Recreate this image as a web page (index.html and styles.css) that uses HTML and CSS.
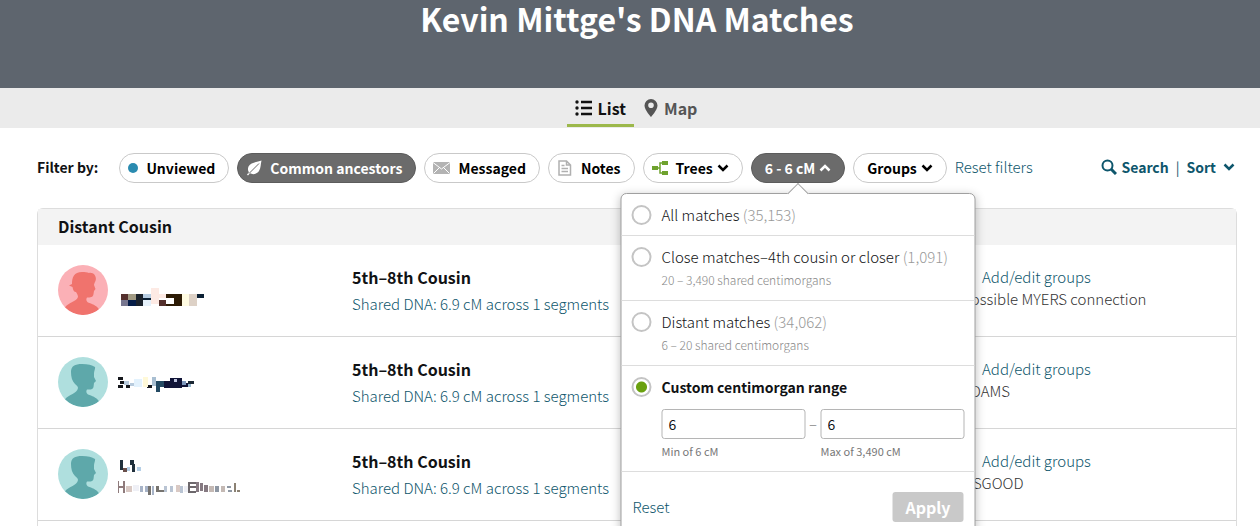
FILE: index.html
```html
<!DOCTYPE html>
<html lang="en">
<head>
    <meta charset="UTF-8">
    <meta name="viewport" content="width=device-width, initial-scale=1">
    <title>Kevin Mittge's DNA Matches</title>
    <link rel="stylesheet" href="styles.css">
</head>
<body>
    <!-- shared shapes -->
    <svg class="sprite" aria-hidden="true">
        <symbol id="chevron" viewBox="0 0 12 8">
            <path d="M1.5 1.5 6 6l4.5-4.5" fill="none" stroke="currentColor" stroke-width="2.5"/>
        </symbol>
        <symbol id="avatar-male" viewBox="0 0 50 50">
            <path d="M7 42.300C11 37 19 37 20 31c0-2-2-3-3-4-3-3-4-7-4-12 0-6 4-8 11-8 6 0 10 1 13 3 .5 2-1 4-1 7v3l2 4-2 2-.5 4c-.5 3-3.500 2.500-6.500 2.500-1 1.500-1 3.500 1 5 4 1.500 8 2.500 11 6.700A25 25 0 0 1 7 42.300z" fill="#5ea8aa"/>
        </symbol>
        <symbol id="avatar-female" viewBox="0 0 50 50">
            <path d="M7 42.300C11 37 18 37 20 32c0-2-1-3-2-5-2 0-3-2-3.500-5L11 20.500l3-1.500c0-7 2-12 10-12 3 0 5 0 7 1 5-1 8 4 6.500 8-1 2-1.500 3-1.500 4l1.500 4-1.500 2-.5 3c-.5 3.500-3 3.500-6.500 3.500-1 1.500-1 3.500 1 5 4 1.500 8 2.500 11 6.700A25 25 0 0 1 7 42.300z" fill="#f0736d"/>
        </symbol>
    </svg>

    <header class="page-header">
        <h1>Kevin Mittge's DNA Matches</h1>
    </header>

    <nav class="view-tabs">
        <a href="#" class="tab active">
            <svg width="17" height="16" viewBox="0 0 17 16" fill="currentColor">
                <circle cx="2" cy="2" r="1.700"/><circle cx="2" cy="8" r="1.700"/><circle cx="2" cy="14" r="1.700"/>
                <path d="M6 .8h11v2.400H6zM6 6.800h11v2.400H6zM6 12.800h11v2.400H6z"/>
            </svg>
            List
        </a>
        <a href="#" class="tab">
            <svg width="14" height="18" viewBox="0 0 14 18">
                <path d="M7 0a6.500 6.500 0 0 0-6.500 6.500C.5 11 7 18 7 18s6.500-7 6.500-11.500A6.500 6.500 0 0 0 7 0zm0 3.500a2.800 2.800 0 1 1 0 5.600 2.800 2.800 0 0 1 0-5.600z" fill="currentColor"/>
            </svg>
            Map
        </a>
    </nav>

    <main class="container">
        <div class="filters">
            <span class="filter-label">Filter by:</span>
            <div class="pills">
                <button type="button" class="pill"><span class="dot"></span>Unviewed</button>
                <button type="button" class="pill selected">
                    <svg width="16" height="16" viewBox="0 0 16 16">
                        <path d="M15.500.5C12 2 5 2 2.500 6.500 1.500 9 2 11 3 12.300L1 14.500l1 1 2-2.200c3 1.700 7 .7 9-2.300C15 8 14.500 4 15.500.5z" fill="#fff"/>
                        <path d="M3 13.500 13 3.500" stroke="#6b6b6b" fill="none"/>
                    </svg>
                    Common ancestors
                </button>
                <button type="button" class="pill">
                    <svg width="17" height="12" viewBox="0 0 17 12">
                        <path d="M0 0h17v12H0z" fill="#b3b3b3"/>
                        <path d="M0 .5l8.500 6.500L17 .5M.5 11.500l6-6M16.500 11.500l-6-6" stroke="#fff" fill="none"/>
                    </svg>
                    Messaged
                </button>
                <button type="button" class="pill">
                    <svg width="16" height="16" viewBox="0 0 16 16">
                        <path d="M2 1h7.500l4 4v10H2zM9.500 1v4h4M4.500 5.500h3M4.500 8.500h6.500M4.500 11.500h6.500" stroke="#b0b0b0" stroke-width="1.500" fill="none"/>
                    </svg>
                    Notes
                </button>
                <button type="button" class="pill">
                    <svg width="16" height="14" viewBox="0 0 16 14">
                        <path d="M0 5h6v4H0zM10 0h6v4h-6zM10 10h6v4h-6z" fill="#6fa22e"/>
                        <path d="M5 7h3M11 2H8v10h3" stroke="#6fa22e" stroke-width="1.500" fill="none"/>
                    </svg>
                    Trees
                    <svg class="chevron" width="12" height="8"><use href="#chevron"/></svg>
                </button>
                <div class="pill-menu">
                    <button type="button" class="pill plain selected" aria-expanded="true">
                        6 - 6 cM
                        <svg class="chevron up" width="12" height="8"><use href="#chevron"/></svg>
                    </button>
                    <form class="popover">
                        <label class="option">
                            <input type="radio" name="range">
                            <span>All matches <span class="count">(35,153)</span></span>
                        </label>
                        <label class="option">
                            <input type="radio" name="range">
                            <span>Close matches–4th cousin or closer <span class="count">(1,091)</span>
                                <small>20 – 3,490 shared centimorgans</small></span>
                        </label>
                        <label class="option">
                            <input type="radio" name="range">
                            <span>Distant matches <span class="count">(34,062)</span>
                                <small>6 – 20 shared centimorgans</small></span>
                        </label>
                        <div class="custom">
                            <label class="option">
                                <input type="radio" name="range" checked>
                                <strong>Custom centimorgan range</strong>
                            </label>
                            <div class="range">
                                <div class="range-field">
                                    <input type="text" id="min-cm" value="6">
                                    <label for="min-cm">Min of 6 cM</label>
                                </div>
                                <span class="dash">–</span>
                                <div class="range-field">
                                    <input type="text" id="max-cm" value="6">
                                    <label for="max-cm">Max of 3,490 cM</label>
                                </div>
                            </div>
                        </div>
                        <div class="popover-footer">
                            <a href="#">Reset</a>
                            <button type="submit" class="apply" disabled>Apply</button>
                        </div>
                    </form>
                </div>
                <button type="button" class="pill plain">
                    Groups
                    <svg class="chevron" width="12" height="8"><use href="#chevron"/></svg>
                </button>
            </div>
            <a href="#" class="reset-filters">Reset filters</a>
            <div class="tools">
                <a href="#">
                    <svg width="16" height="16" viewBox="0 0 16 16" fill="none" stroke="currentColor">
                        <circle cx="6.500" cy="6.500" r="5" stroke-width="2"/>
                        <path d="M10 10l5 5" stroke-width="3"/>
                    </svg>
                    Search
                </a>
                <span class="divider">|</span>
                <a href="#" class="sort">Sort <svg class="chevron" width="12" height="8"><use href="#chevron"/></svg></a>
            </div>
        </div>

        <section class="matches">
            <h2>Distant Cousin</h2>
            <div class="match">
                <svg class="avatar female" viewBox="0 0 50 50"><use href="#avatar-female"/></svg>
                <div class="name">
                    <svg width="90" height="32" viewBox="0 -18 90 32" shape-rendering="crispEdges">
                        <path d="M3 1h7v6H3zM41 7h7v6h-7z" fill="#54302d"/>
                        <path d="M10 1h8v6h-8z" fill="#a19a83"/>
                        <path d="M18 1h7v12h-7z" fill="#1b222c"/>
                        <path d="M10 7h8v6h-8z" fill="#051c47"/>
                        <path d="M3 7h7v6H3z" fill="#77768f"/>
                        <path d="M25 1h8v4h-8z" fill="#b8cee3"/>
                        <path d="M25 5h8v2h-8zM79 1h7v4h-7z" fill="#0c2135"/>
                        <path d="M25 7h8v6h-8z" fill="#e6f1fb"/>
                        <path d="M33-5h8v16h-8z" fill="#fdeae4"/>
                        <path d="M41 1h7v4h-7z" fill="#fdeae4"/>
                        <path d="M48 1h16v12H48z" fill="#2d1b05"/>
                        <path d="M48 5h8v6h-8z" fill="#fff"/>
                        <path d="M64 1h7v12h-7z" fill="#fffbe2"/>
                        <path d="M71 1h8v12h-8z" fill="#ddd1c6"/>
                    </svg>
                </div>
                <div class="relation">
                    <h3>5th–8th Cousin</h3>
                    <a href="#">Shared DNA: 6.9 cM across 1 segments</a>
                </div>
                <div class="groups">
                    <a href="#">Add/edit groups</a>
                    <p>Possible MYERS connection</p>
                </div>
            </div>
            <div class="match">
                <svg class="avatar male" viewBox="0 0 50 50"><use href="#avatar-male"/></svg>
                <div class="name">
                    <svg width="90" height="20" viewBox="0 0 90 20" shape-rendering="crispEdges">
                        <path d="M0 4h5v3H0zM2 8h4v3H2zM0 12h5v3H0zM8 12h4v3H8zM29 12h5v3h-5z" fill="#15171c"/>
                        <path d="M6 8h5v4H6zM12 10h4v3h-4z" fill="#b8cbdd"/>
                        <path d="M16 6h8v8h-8z" fill="#e3f2fd"/>
                        <path d="M25 4h5v10h-5z" fill="#fff9d8"/>
                        <path d="M34 4h4v9h-4z" fill="#a9bfd2"/>
                        <path d="M38 8h4v11h-4zM42 8h8v6h-8z" fill="#244a63"/>
                        <path d="M46 8h6v7h-6zM52 5h12v10H52zM64 10h6v4h-6z" fill="#101437"/>
                        <path d="M56 6h3v3h-3z" fill="#bdc3dd"/>
                        <path d="M64 8h4v4h-4z" fill="#7e98bd"/>
                        <path d="M70 8h6v3h-6z" fill="#1b2733"/>
                        <path d="M70 11h3v3h-3z" fill="#92b3cc"/>
                    </svg>
                </div>
                <div class="relation">
                    <h3>5th–8th Cousin</h3>
                    <a href="#">Shared DNA: 6.9 cM across 1 segments</a>
                </div>
                <div class="groups">
                    <a href="#">Add/edit groups</a>
                    <p>ADAMS</p>
                </div>
            </div>
            <div class="match">
                <svg class="avatar male" viewBox="0 0 50 50"><use href="#avatar-male"/></svg>
                <div class="name">
                    <svg width="130" height="40" viewBox="2 0 130 40" shape-rendering="crispEdges">
                        <path d="M4 5h3v10H4zM14 5h4v5h-4zM16 9h3v8h-3z" fill="#20303c"/>
                        <path d="M7 13h4v4H7z" fill="#6a4f4a"/>
                        <path d="M11 12h3v4h-3zM21 12h4v4h-4z" fill="#b5cfe6"/>
                        <path d="M1 26h2v12H1zM7 26h2v12H7zM3 31h4v2H3z" fill="#8f7b7c"/>
                        <path d="M10 31h6v6h-6zM60 30h4v7h-4z" fill="#d9c9c4"/>
                        <path d="M17 30h6v6h-6zM68 31h4v6h-4z" fill="#eff0f6"/>
                        <path d="M24 31h3v6h-3zM29 31h4v6h-4zM36 31h2v9h-2z" fill="#a7b3c7"/>
                        <path d="M32 31h3v9h-3zM40 31h3v6h-3zM43 35h5v2h-5z" fill="#76736f"/>
                        <path d="M48 31h3v6h-3zM54 31h3v6h-3zM64 31h3v7h-3z" fill="#b9c4d3"/>
                        <path d="M72 27h8v2h-8zM72 31h8v2h-8zM72 36h8v2h-8zM72 27h2v11h-2z" fill="#6d686c"/>
                        <path d="M80 27h3v10h-3zM84 28h3v8h-3zM88 30h4v7h-4z" fill="#867a82"/>
                        <path d="M93 31h5v6h-5zM105 31h4v6h-4z" fill="#c4b9b4"/>
                        <path d="M99 31h4v6h-4zM111 31h4v2h-4zM112 35h4v2h-4z" fill="#8e97a3"/>
                        <path d="M118 28h2v9h-2zM121 35h3v2h-3z" fill="#8b8173"/>
                    </svg>
                </div>
                <div class="relation">
                    <h3>5th–8th Cousin</h3>
                    <a href="#">Shared DNA: 6.9 cM across 1 segments</a>
                </div>
                <div class="groups">
                    <a href="#">Add/edit groups</a>
                    <p>OSGOOD</p>
                </div>
            </div>
        </section>
    </main>
</body>
</html>
```

FILE: styles.css
```css
:root {
    --link-color: #0e566c;
    --text-color: #111214;
    --border-color: #d6d6d6;
    --pill-selected: #6b6b6b;
}

* {
    box-sizing: border-box;
    font-family: "Noto Sans CJK SC", "Noto Sans", sans-serif;
}

html {
    height: 100%;
    overflow: hidden;
}

body {
    min-height: 100vh;
    margin: 0;
    background-color: white;
    color: var(--text-color);
    font-size: 15px;
    font-weight: 300;
    line-height: 22px;
}

a {
    color: var(--link-color);
    text-decoration: none;
}

h1, h2, h3, p {
    margin: 0;
}

.sprite {
    display: none;
}

.page-header {
    height: 88px;
    padding: 0 23px 0 37px;
    background-color: #5e656e;
    color: white;
    text-align: center;
}

.page-header h1 {
    font-size: 32px;
    line-height: 36px;
    font-weight: 700;
}

.view-tabs {
    display: flex;
    justify-content: center;
    gap: 2px;
    height: 40px;
    padding: 0 20px 0 32px;
    background-color: #ebebeb;
}

.tab {
    display: flex;
    align-items: center;
    gap: 6px;
    height: 39px;
    padding: 3px 8px 0;
    border-bottom: 3px solid transparent;
    color: #555;
    font-size: 16px;
    font-weight: 700;
}

.tab.active {
    border-bottom-color: #9cb84b;
    color: #111;
}

.container {
    padding: 25px 23px 0 37px;
}

/* filter bar */
.filters {
    display: flex;
    align-items: center;
    margin-bottom: 25px;
}

.filter-label {
    margin-right: 21px;
    padding-bottom: 2px;
    font-size: 14px;
    font-weight: 700;
}

.pills {
    display: flex;
    gap: 8px;
}

.pill {
    display: flex;
    align-items: center;
    gap: 8px;
    height: 30px;
    padding: 0 13px 0 8px;
    border: 1px solid #c9c9c9;
    border-radius: 15px;
    background-color: white;
    color: #000;
    font-size: 14px;
    font-weight: 700;
    white-space: nowrap;
    cursor: pointer;
}

.pill.plain {
    padding: 0 13px;
}

.pill.selected {
    border-color: #5c5c5c;
    background-color: var(--pill-selected);
    color: white;
}

.pill .chevron {
    margin-left: -4px;
}

.dot {
    width: 10px;
    height: 10px;
    border-radius: 50%;
    background-color: #2a8bb0;
}

.chevron.up {
    transform: rotate(180deg);
}

.reset-filters {
    margin-left: 8px;
    padding-bottom: 2px;
}

.tools {
    display: flex;
    gap: 7px;
    margin-left: auto;
    padding: 0 2px 2px 0;
    color: var(--link-color);
    font-size: 14px;
    font-weight: 700;
}

.tools a {
    display: flex;
    align-items: center;
    gap: 4px;
}

.tools .sort {
    gap: 7px;
}

.divider {
    font-weight: 400;
}

/* centimorgan menu */
.pill-menu {
    position: relative;
}

.popover {
    position: absolute;
    top: 40px;
    left: 50%;
    z-index: 10;
    width: 355px;
    transform: translateX(-50%);
    border: 1px solid #a0a0a0;
    border-radius: 6px;
    background-color: white;
    box-shadow: 0 2px 10px rgba(0, 0, 0, 0.25);
}

.popover::before {
    content: "";
    position: absolute;
    top: -8px;
    left: 50%;
    width: 14px;
    height: 14px;
    margin-left: -7px;
    transform: rotate(45deg);
    border: 1px solid #a0a0a0;
    border-right: none;
    border-bottom: none;
    background-color: white;
}

.option {
    display: flex;
    gap: 10px;
    padding: 11px 10px 10px;
    line-height: 20px;
}

.option strong {
    font-size: 14px;
    font-weight: 700;
}

.popover > .option {
    border-bottom: 1px solid #ddd;
}

.option small {
    display: block;
    margin-top: 2px;
    color: #888;
    font-size: 12px;
    line-height: 21px;
}

.count {
    color: #999;
}

input[type="radio"] {
    flex: none;
    width: 20px;
    height: 20px;
    margin: 0;
    appearance: none;
    border: 2px solid #c4c4c4;
    border-radius: 50%;
    background-color: white;
}

input[type="radio"]:checked {
    background: radial-gradient(circle, #6aa10f 5px, white 6px);
}

.custom {
    border-bottom: 1px solid #ddd;
}

.range {
    display: flex;
    padding: 2px 10px 9px 40px;
}

.range-field {
    flex: 1;
    min-width: 0;
}

.range-field input {
    display: block;
    width: 100%;
    height: 30px;
    padding: 0 6px;
    border: 1px solid #b5b5b5;
    border-radius: 3px;
    color: var(--text-color);
    font-size: 14px;
}

.range-field label {
    display: block;
    margin-top: 1px;
    color: #777;
    font-size: 11px;
    font-weight: 400;
}

.dash {
    width: 15px;
    color: #777;
    line-height: 30px;
    text-align: center;
}

.popover-footer {
    display: flex;
    align-items: center;
    justify-content: space-between;
    padding: 20px 11px;
}

.apply {
    height: 30px;
    padding: 0 13px;
    border: none;
    border-radius: 3px;
    background-color: #c9c9c9;
    color: white;
    font-size: 16px;
    font-weight: 700;
}

/* match list */
.matches {
    border: 1px solid #ddd;
    border-radius: 6px 6px 0 0;
    min-height: 320px;
}

.matches h2 {
    padding: 6px 20px 8px;
    background-color: #f3f3f3;
    font-size: 16px;
    font-weight: 700;
}

.match {
    display: grid;
    grid-template-columns: 50px 234px 620px 1fr;
    height: 92px;
    padding: 20px;
    border-bottom: 1px solid var(--border-color);
}

.avatar {
    width: 50px;
    height: 50px;
    border-radius: 50%;
}

.avatar.male {
    background-color: #afdfde;
}

.avatar.female {
    background-color: #fbb0b6;
}

.name {
    display: flex;
    align-items: center;
    padding-left: 10px;
}

.relation {
    padding: 1px 0 0 10px;
}

.relation h3 {
    margin-bottom: 5px;
    font-size: 16px;
    font-weight: 700;
}

.groups {
    padding-top: 1px;
}

.groups a {
    padding-left: 20px;
}

.groups p {
    color: #333;
}
```
